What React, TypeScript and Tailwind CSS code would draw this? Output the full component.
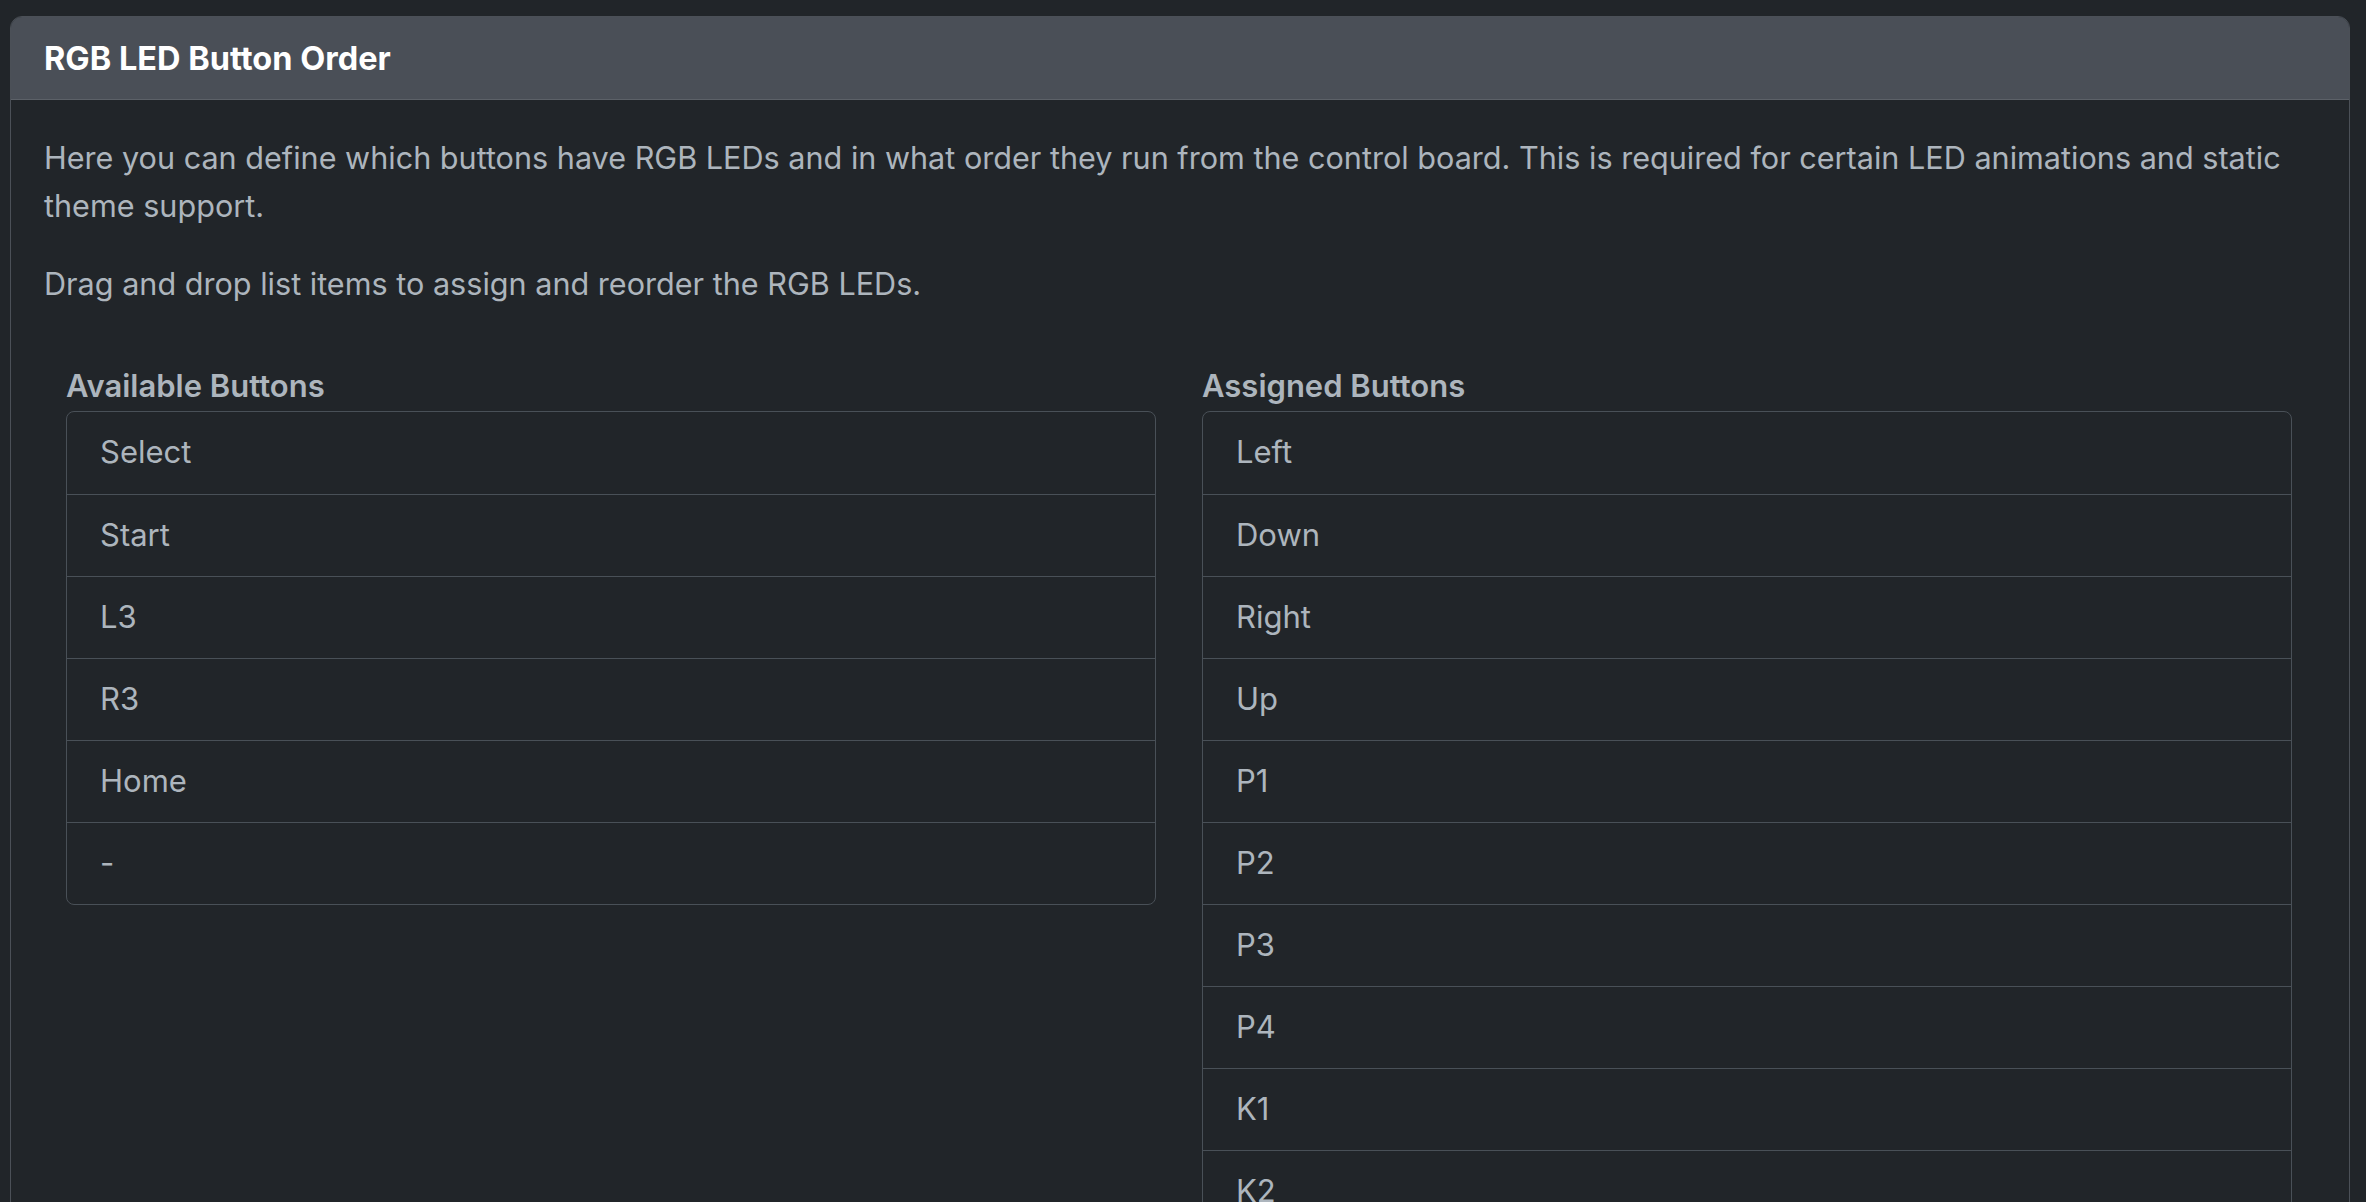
const available = ['Select', 'Start', 'L3', 'R3', 'Home', '-'];
const assigned = ['Left', 'Down', 'Right', 'Up', 'P1', 'P2', 'P3', 'P4', 'K1', 'K2', 'L1', 'R1', 'L2', 'R2'];

const ButtonList = ({ title, items }: { title: string; items: string[] }) => (
  <div className="flex-1 min-w-0">
    <h3 className="text-[31px] leading-[36px] font-semibold text-[#adb5bd] mb-[7px]">{title}</h3>
    <ul className="border border-[#495057] rounded-[8px]">
      {items.map((item, i) => (
        <li
          key={i}
          className={`h-[82px] flex items-center px-[33px] text-[31px] text-[#adb5bd] ${
            i > 0 ? 'border-t border-[#495057]' : ''
          }`}
        >
          {item}
        </li>
      ))}
    </ul>
  </div>
);

export default function App() {
  return (
    <div
      className="h-[1202px] overflow-hidden bg-[#212529] pl-[10px] pr-[16px] pt-[16px]"
      style={{ fontFamily: 'Inter, "Noto Sans", sans-serif' }}
    >
      <div className="border border-[#4b5057] rounded-[12px] min-h-[1400px]">
        {/* Header */}
        <div className="h-[83px] bg-[#4a4f57] border-b border-[#5c6168] rounded-t-[11px] flex items-center px-[33px] pt-[2px]">
          <h2 className="text-[32.5px] font-bold text-white">RGB LED Button Order</h2>
        </div>

        {/* Body */}
        <div className="px-[33px] pt-[33.5px]">
          <p className="text-[30.6px] leading-[48px] text-[#adb5bd]">
            Here you can define which buttons have RGB LEDs and in what order they run from the control board. This is
            required for certain LED animations and static theme support.
          </p>
          <p className="text-[30.6px] leading-[48px] text-[#adb5bd] mt-[30px]">
            Drag and drop list items to assign and reorder the RGB LEDs.
          </p>

          <div className="flex gap-[46px] pl-[22px] pr-[24px] mt-[60px]">
            <ButtonList title="Available Buttons" items={available} />
            <ButtonList title="Assigned Buttons" items={assigned} />
          </div>
        </div>
      </div>
    </div>
  );
}
